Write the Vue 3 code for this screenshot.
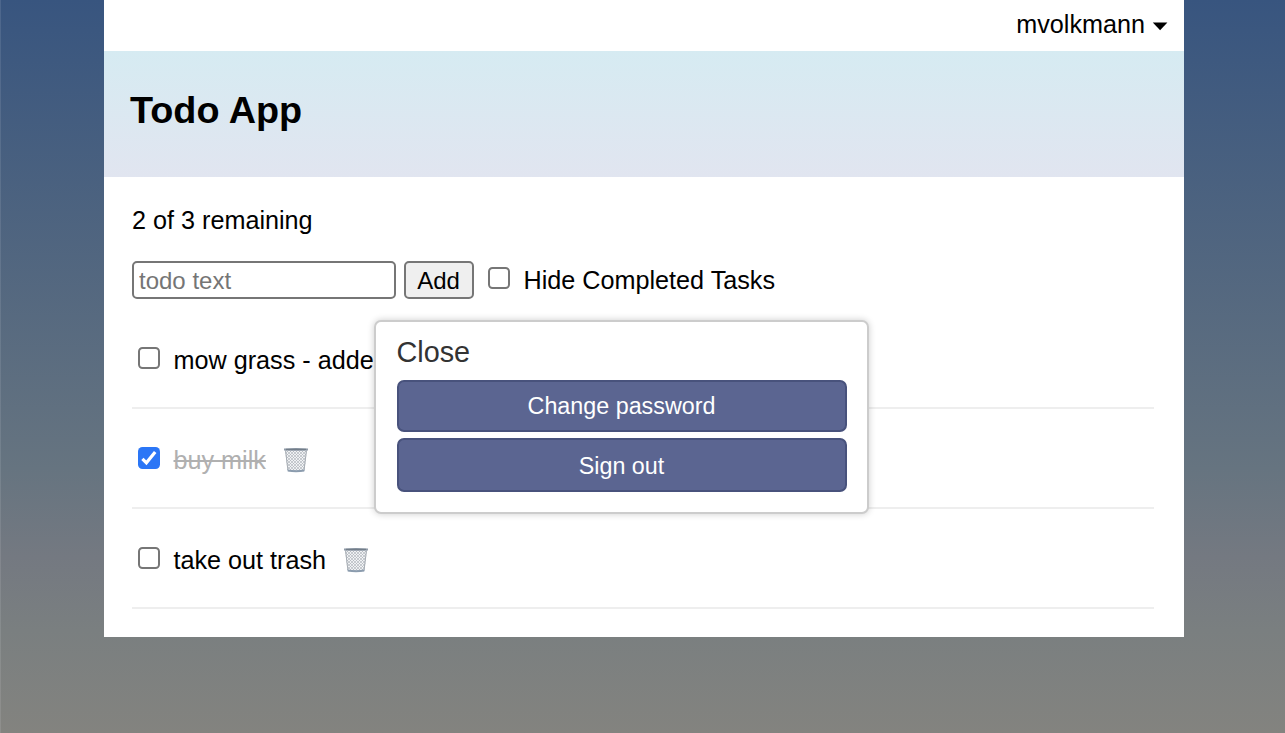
<script setup>
import { ref } from 'vue'

const user = 'mvolkmann'
const hideCompleted = ref(false)
const todos = ref([
  { id: 1, text: 'mow grass - added', done: false },
  { id: 2, text: 'buy milk', done: true },
  { id: 3, text: 'take out trash', done: false }
])
</script>

<template>
  <div class="page">
    <main class="container">
      <nav class="account">
        <span class="user">{{ user }}</span>
        <svg class="caret" width="16" height="9" viewBox="0 0 16 9"><path d="M.8 .5h14.600L8.100 8.200z" /></svg>
      </nav>
      <header><h1>Todo App</h1></header>
      <section class="body">
        <p class="remaining">2 of 3 remaining</p>
        <form class="new-todo" @submit.prevent>
          <input class="field" type="text" placeholder="todo text" />
          <button class="add">Add</button>
          <label class="hide">
            <input v-model="hideCompleted" class="check" type="checkbox" />
            <span class="hide-text">Hide Completed Tasks</span>
          </label>
        </form>
        <ul>
          <li v-for="(todo, i) in todos" :key="todo.id">
            <span class="check" :class="{ on: todo.done }">
              <svg v-if="todo.done" width="22" height="22" viewBox="0 0 22 22"><path d="M4.400 11.800 8.400 15.800 17.200 5" /></svg>
            </span>
            <span class="text" :class="{ done: todo.done }">{{ todo.text }}</span>
            <svg class="trash" width="26" height="26" viewBox="0 0 26 26">
              <defs>
                <pattern :id="'mesh' + i" width="3" height="3" patternUnits="userSpaceOnUse">
                  <path d="M0 0 3 3M3 0 0 3" stroke="#a9afb6" stroke-width=".6" />
                </pattern>
              </defs>
              <path d="M2 2.500h22l-2.600 21.500q-8.400 1.800-16.800 0z" fill="#f0f2f4" />
              <path d="M2 2.500h22l-2.600 21.500q-8.400 1.800-16.800 0z" :fill="`url(#mesh${i})`" />
              <path d="M2.600 4 4.900 23M23.400 4 21.100 23" stroke="#a6acb3" stroke-width="1" />
              <path d="M4.400 22.600q8.600 1.200 17.200 0l-.3 2q-8.300 1.200-16.600 0z" fill="#8b9cae" />
              <path d="M1 1.400q12-.8 24 0v2q-12 .8-24 0z" fill="#909ba8" />
              <path d="M3 2.300h20" stroke="#626d79" stroke-width=".8" />
            </svg>
          </li>
        </ul>
      </section>
      <div class="popup">
        <a class="close">Close</a>
        <button class="action change">Change password</button>
        <button class="action sign-out">Sign out</button>
      </div>
    </main>
  </div>
</template>

<style>
body {
  margin: 0;
  overflow: hidden;
}
</style>

<style scoped>
* {
  box-sizing: border-box;
}
.page {
  height: 733px;
  padding: 0 101px 0 104px;
  background: linear-gradient(#38557f, #667480 64%, #747981 76%, #7a7f80 86%, #83837f);
  box-shadow: inset 1px 0 0 rgba(255, 255, 255, .1);
  font-family: "Liberation Sans", Arial, sans-serif;
  font-size: 25.200px;
  color: #000;
}
.container {
  position: relative;
  height: 637px;
  background: #fff;
}
.account {
  height: 51px;
  display: flex;
  justify-content: flex-end;
  align-items: center;
  padding: 0 16px 3px 0;
  gap: 7px;
}
.caret {
  margin-top: 5px;
}
header {
  height: 126px;
  padding: 37px 26px 0;
  background: linear-gradient(#d6ebf2, #e1e5f0);
}
h1 {
  margin: 0;
  font-size: 37.800px;
  line-height: 44px;
}
.body {
  padding: 28px 30px 0 28px;
}
.remaining {
  margin: 0;
  line-height: 30px;
}
.new-todo {
  display: flex;
  height: 38px;
  margin-top: 26px;
}
.field {
  width: 264px;
  padding: 1px 5px 0;
  border: 2px solid #767676;
  border-radius: 5px;
  font: 24px "Liberation Sans", Arial, sans-serif;
  background: #fff;
}
.field::placeholder {
  color: #757575;
}
.add {
  width: 70px;
  margin-left: 8px;
  padding: 1px 1px 0 0;
  border: 2px solid #767676;
  border-radius: 5px;
  background: #efefef;
  color: #000;
  font: 24px "Liberation Sans", Arial, sans-serif;
}
.hide {
  display: flex;
  align-items: flex-start;
  margin: 6px 0 0 14px;
}
.check {
  appearance: none;
  flex: none;
  width: 22px;
  height: 22px;
  margin: 0;
  border: 2px solid #767676;
  border-radius: 4.500px;
  background: #fff;
}
.check.on {
  border: 0;
  background: #2b76f6;
}
.check svg {
  display: block;
}
.check path {
  fill: none;
  stroke: #fff;
  stroke-width: 3.200;
}
.hide-text {
  margin: -2px 0 0 13.500px;
  line-height: 30px;
}
ul {
  list-style: none;
  margin: 10px 0 0;
  padding: 0;
}
li {
  display: flex;
  align-items: flex-start;
  height: 100px;
  padding: 38px 0 0 6px;
  border-bottom: 2px solid #eee;
}
.text {
  margin: -2px 0 0 13.500px;
  line-height: 30px;
}
.done {
  color: #b0b0b0;
  text-decoration: line-through;
}
.trash {
  margin: 0 0 0 17px;
}
.popup {
  position: absolute;
  left: 270px;
  top: 320px;
  width: 495px;
  height: 194px;
  padding: 14px 20px 0 21px;
  border: 2px solid #ccc;
  border-radius: 7px;
  background: #fff;
  box-shadow: 0 0 7px rgba(0, 0, 0, .2);
  display: flex;
  flex-direction: column;
}
.close {
  margin-left: -.5px;
  color: #333;
  font-size: 28.800px;
  line-height: 32px;
}
.action {
  height: 52px;
  margin: 12px 0 0;
  padding: 1px 1px 0 0;
  border: 2px solid #48527c;
  border-radius: 7px;
  background: #5b6591;
  color: #fff;
  font: 23.300px "Liberation Sans", Arial, sans-serif;
}
.sign-out {
  height: 54px;
  margin-top: 6px;
  padding-top: 3px;
}
</style>
